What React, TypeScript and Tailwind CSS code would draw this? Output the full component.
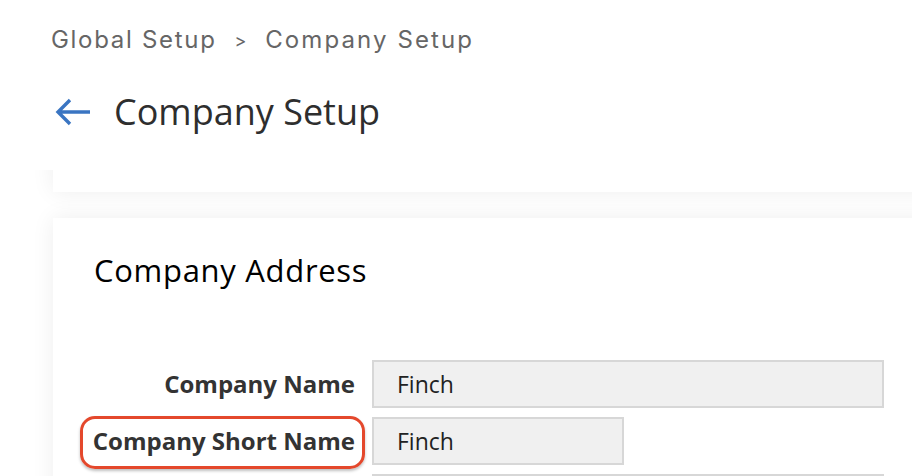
import React from "react";

const openSans = { fontFamily: '"Open Sans", "Noto Sans", sans-serif' };

function BackArrow() {
  return (
    <svg width="38" height="30" viewBox="0 0 38 30" fill="none">
      <path
        d="M36 15H4M16 3L4 15l12 12"
        stroke="#3a75c2"
        strokeWidth="3.4"
        strokeLinecap="butt"
        strokeLinejoin="miter"
      />
    </svg>
  );
}

function Field({
  label,
  value,
  width,
  highlight,
}: {
  label: string;
  value: string;
  width: string;
  highlight?: boolean;
}) {
  return (
    <div className="flex items-center gap-[17px]">
      <div className="w-[262px] flex justify-end">
        <span className="relative text-[24px] font-bold text-[#333] leading-none whitespace-nowrap">
          {label}
          {highlight && (
            <span className="absolute -left-[13px] -right-[10px] -top-[13px] -bottom-[16px] rounded-[15px] border-[3px] border-[#e4482c] shadow-[0_2px_3px_rgba(0,0,0,0.25)]" />
          )}
        </span>
      </div>
      <div
        className={`${width} h-[48px] bg-[#f0f0f0] border-2 border-[#d7d7d7] flex items-center pl-[23px] text-[23px] text-[#222]`}
      >
        {value}
      </div>
    </div>
  );
}

export default function App() {
  return (
    <div className="w-[912px] h-[476px] overflow-hidden bg-white relative" style={openSans}>
      <nav
        className="flex items-center pt-[22px] pl-[51px] text-[24px] text-[#666] tracking-[1.7px]"
        style={{ fontFamily: 'Inter, Roboto, sans-serif' }}
      >
        <span>Global Setup</span>
        <span className="ml-[18px] mr-[17px] text-[18px]">&gt;</span>
        <span className="tracking-[2.1px]">Company Setup</span>
      </nav>

      <div className="flex items-center pl-[54px] mt-[36px]">
        <BackArrow />
        <h1 className="ml-[22px] text-[36px] text-[#2e2e2e] leading-none">Company Setup</h1>
      </div>

      <div className="absolute left-0 right-0 top-[170px] bottom-0 overflow-hidden pl-[53px]">
        <div className="-mt-[60px] h-[82px] w-[1000px] bg-white shadow-[0_0_22px_rgba(0,0,0,0.07)]" />
        <div className="mt-[26px] w-[1000px] h-[400px] bg-white shadow-[0_0_22px_rgba(0,0,0,0.07)] pl-[41px] pt-[37px]">
          <h2 className="text-[31px] tracking-[0.7px] text-black leading-none">Company Address</h2>
          <div className="mt-[74px] -ml-[41px] pl-[40px] flex flex-col gap-[9px]">
            <Field label="Company Name" value="Finch" width="w-[512px]" />
            <Field label="Company Short Name" value="Finch" width="w-[252px]" highlight />
            <Field label="" value="" width="w-[512px]" />
          </div>
        </div>
      </div>
    </div>
  );
}
